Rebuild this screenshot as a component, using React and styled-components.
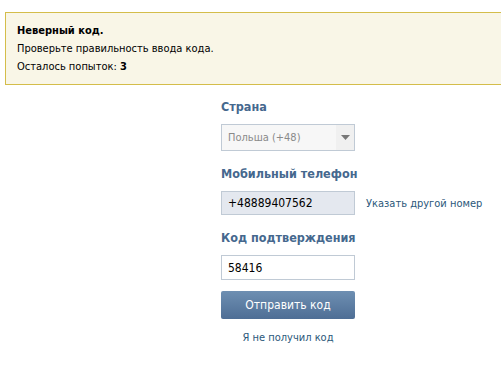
import React from "react";
import styled, { createGlobalStyle } from "styled-components";

const Global = createGlobalStyle`
  html, body { margin: 0; padding: 0; background: #fff; overflow: hidden; }
  body { font-family: "DejaVu Sans Condensed", "DejaVu Sans", Tahoma, sans-serif; font-size: 11px; color: #000; }
`;

const Page = styled.div`
  width: 501px;
  height: 366px;
  overflow: hidden;
`;

const Notice = styled.div`
  margin: 12px -20px 0 5px;
  padding: 9px 11px 8px;
  background: #f9f6e7;
  border: 1px solid #d4bd4a;
  line-height: 18px;
`;

const NoticeTitle = styled.div`
  font-weight: bold;
`;

const Bold = styled.b`
  font-weight: bold;
`;

const Form = styled.div`
  display: flex;
  flex-direction: column;
  padding: 14px 0 0 221px;
`;

const Label = styled.div`
  color: #45688e;
  font-weight: bold;
  font-size: 12.5px;
  line-height: 16px;
  margin: ${p => p.$first ? "0" : "15px"} 0 9px;
`;

const Row = styled.div`
  display: flex;
  align-items: center;
  gap: 11px;
`;

const Field = styled.div`
  box-sizing: border-box;
  width: 134px;
  height: ${p => p.$h}px;
  border: 1px solid #c0cad5;
  background: ${p => p.$bg};
  color: ${p => p.$color || "#000"};
  font-size: ${p => p.$fs || 12}px;
  padding: 0 6px;
  display: flex;
  align-items: center;
`;

const SelectBox = styled(Field)`
  padding: 0 0 0 6px;
  justify-content: space-between;
`;

const Arrow = styled.div`
  width: 18px;
  height: 100%;
  background: #f0f0f0;
  display: flex;
  align-items: center;
  justify-content: center;
`;

const Link = styled.span`
  color: #2b587a;
  font-size: 11px;
`;

const Button = styled.div`
  margin-top: 11px;
  width: 134px;
  height: 28px;
  box-sizing: border-box;
  border-radius: 2px;
  background: linear-gradient(#6e8fb2, #4e6e95);
  color: #fff;
  font-size: 12px;
  display: flex;
  align-items: center;
  justify-content: center;
`;

const Bottom = styled.div`
  width: 134px;
  text-align: center;
  margin-top: 12px;
`;

export default function App() {
  return (
    <Page>
      <Global />
      <Notice>
        <NoticeTitle>Неверный код.</NoticeTitle>
        <div>Проверьте правильность ввода кода.</div>
        <div>Осталось попыток: <Bold>3</Bold></div>
      </Notice>
      <Form>
        <Label $first>Страна</Label>
        <SelectBox $h={27} $bg="#f7f7f7" $color="#8a8a8a" $fs={11}>
          <span>Польша (+48)</span>
          <Arrow>
            <svg width="9" height="5" viewBox="0 0 9 5"><path d="M0 0h9L4.5 5z" fill="#777" /></svg>
          </Arrow>
        </SelectBox>
        <Label>Мобильный телефон</Label>
        <Row>
          <Field $h={24} $bg="#e4e8ef">+48889407562</Field>
          <Link>Указать другой номер</Link>
        </Row>
        <Label>Код подтверждения</Label>
        <Field $h={25} $bg="#fff">58416</Field>
        <Button>Отправить код</Button>
        <Bottom><Link>Я не получил код</Link></Bottom>
      </Form>
    </Page>
  );
}
